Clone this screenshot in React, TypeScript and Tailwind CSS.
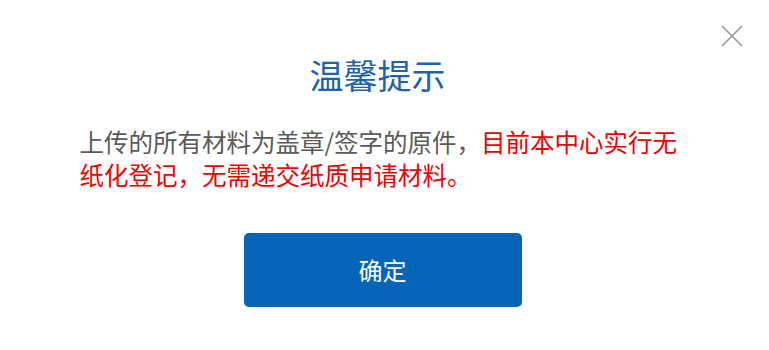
const App = () => {
  return (
    <div
      className="relative w-[769px] h-[350px] bg-white"
      style={{ fontFamily: '"Microsoft YaHei", "Noto Sans CJK SC", sans-serif' }}
    >
      <button className="absolute right-[26px] top-[25px] w-[22px] h-[22px] text-[#9a9a9a]">
        <svg viewBox="0 0 22 22" width="22" height="22" fill="none" stroke="currentColor" strokeWidth="1.6">
          <path d="M1 1 L21 21 M21 1 L1 21" />
        </svg>
      </button>
      <div className="flex flex-col items-center pt-[51px]">
        <h2 className="text-[34px] leading-[48px] text-[#1c62ad] font-normal pr-[14px]">温馨提示</h2>
        <p className="mt-[26px] w-[610px] text-[24.5px] leading-[33px] text-[#5a5a5a] pl-[1px] -ml-[2px]">
          上传的所有材料为盖章/签字的原件，
          <span className="text-[#f00000]">目前本中心实行无纸化登记，无需递交纸质申请材料。</span>
        </p>
        <button className="mt-[42px] w-[278px] h-[74px] rounded-[5px] bg-[#0765b7] text-white text-[24px] -ml-[4px]">
          确定
        </button>
      </div>
    </div>
  );
};

export default App;
